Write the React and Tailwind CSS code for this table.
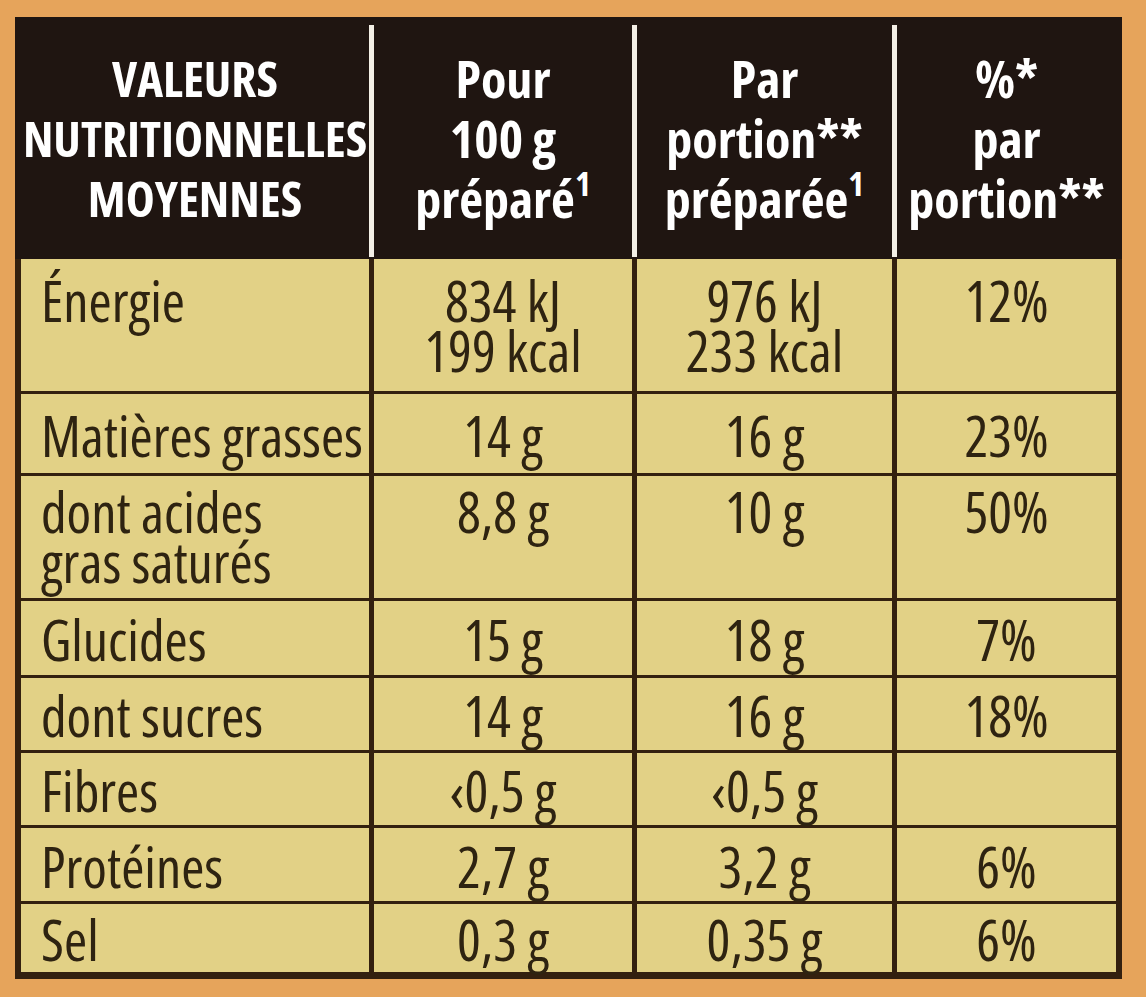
import React from "react";

const rows = [
  { label: ["Énergie"], a: ["834 kJ", "199 kcal"], b: ["976 kJ", "233 kcal"], c: ["12%"], h: "h-[132px]", pad: "pt-[16px]", multi: true },
  { label: ["Matières grasses"], a: ["14 g"], b: ["16 g"], c: ["23%"], h: "h-[79px]" },
  { label: ["dont acides", "gras saturés"], a: ["8,8 g"], b: ["10 g"], c: ["50%"], h: "h-[122px]", pad: "pt-[10px]", multi: true },
  { label: ["Glucides"], a: ["15 g"], b: ["18 g"], c: ["7%"], h: "h-[74px]" },
  { label: ["dont sucres"], a: ["14 g"], b: ["16 g"], c: ["18%"], h: "h-[72px]" },
  { label: ["Fibres"], a: ["‹0,5 g"], b: ["‹0,5 g"], c: [""], h: "h-[72px]" },
  { label: ["Protéines"], a: ["2,7 g"], b: ["3,2 g"], c: ["6%"], h: "h-[73px]" },
  { label: ["Sel"], a: ["0,3 g"], b: ["0,35 g"], c: ["6%"], h: "h-[68px]" },
];

function Cell({ lines, row, align }) {
  const base = `bg-[#e2d186] ${row.h} flex flex-col ${align === "left" ? "items-start pl-[20px]" : "items-center"} `;
  const v = row.multi ? `justify-start ${row.pad}` : "justify-center pt-[2px]";
  return (
    <div className={base + v}>
      {lines.map((l, i) => (
        <div key={i} className="whitespace-nowrap">
          {l}
        </div>
      ))}
    </div>
  );
}

function Divider() {
  return <div className="w-[5px] shrink-0 bg-[#f3efe6] mt-[8px] mb-[2px]" />;
}

export default function App() {
  return (
    <div className="w-[1146px] h-[997px] bg-[#e6a45b] pt-[17px] pl-[15px] overflow-hidden font-['Open_Sans',sans-serif] font-stretch-condensed">
      <div className="w-[1107px] bg-[#33200f]">
        {/* header */}
        <div className="flex h-[242px] bg-[#1f1511] px-[6px] text-white font-bold text-[52px] leading-[60px]">
          <div className="w-[348px] shrink-0 flex flex-col items-center justify-center text-[49px]">
            <span className="whitespace-nowrap leading-[60px]">VALEURS</span>
            <span className="whitespace-nowrap leading-[60px]">NUTRITIONNELLES</span>
            <span className="whitespace-nowrap leading-[60px]">MOYENNES</span>
          </div>
          <Divider />
          <div className="w-[258px] shrink-0 flex flex-col items-center justify-center">
            <span>Pour</span>
            <span>100 g</span>
            <span className="whitespace-nowrap">
              préparé<sup className="text-[34px] relative -top-[22px]">1</sup>
            </span>
          </div>
          <Divider />
          <div className="w-[255px] shrink-0 flex flex-col items-center justify-center">
            <span>Par</span>
            <span className="whitespace-nowrap">portion**</span>
            <span className="whitespace-nowrap">
              préparée<sup className="text-[34px] relative -top-[22px]">1</sup>
            </span>
          </div>
          <Divider />
          <div className="w-[219px] shrink-0 flex flex-col items-center justify-center">
            <span>%*</span>
            <span>par</span>
            <span className="whitespace-nowrap">portion**</span>
          </div>
        </div>
        {/* body */}
        <div className="grid grid-cols-[348px_258px_255px_219px] gap-x-[5px] gap-y-[3px] px-[6px] pb-[7px] text-[56px] leading-[50px] font-medium text-[#2e2311]">
          {rows.map((r, i) => (
            <React.Fragment key={i}>
              <Cell lines={r.label} row={r} align="left" />
              <Cell lines={r.a} row={r} />
              <Cell lines={r.b} row={r} />
              <Cell lines={r.c} row={r} />
            </React.Fragment>
          ))}
        </div>
      </div>
    </div>
  );
}
